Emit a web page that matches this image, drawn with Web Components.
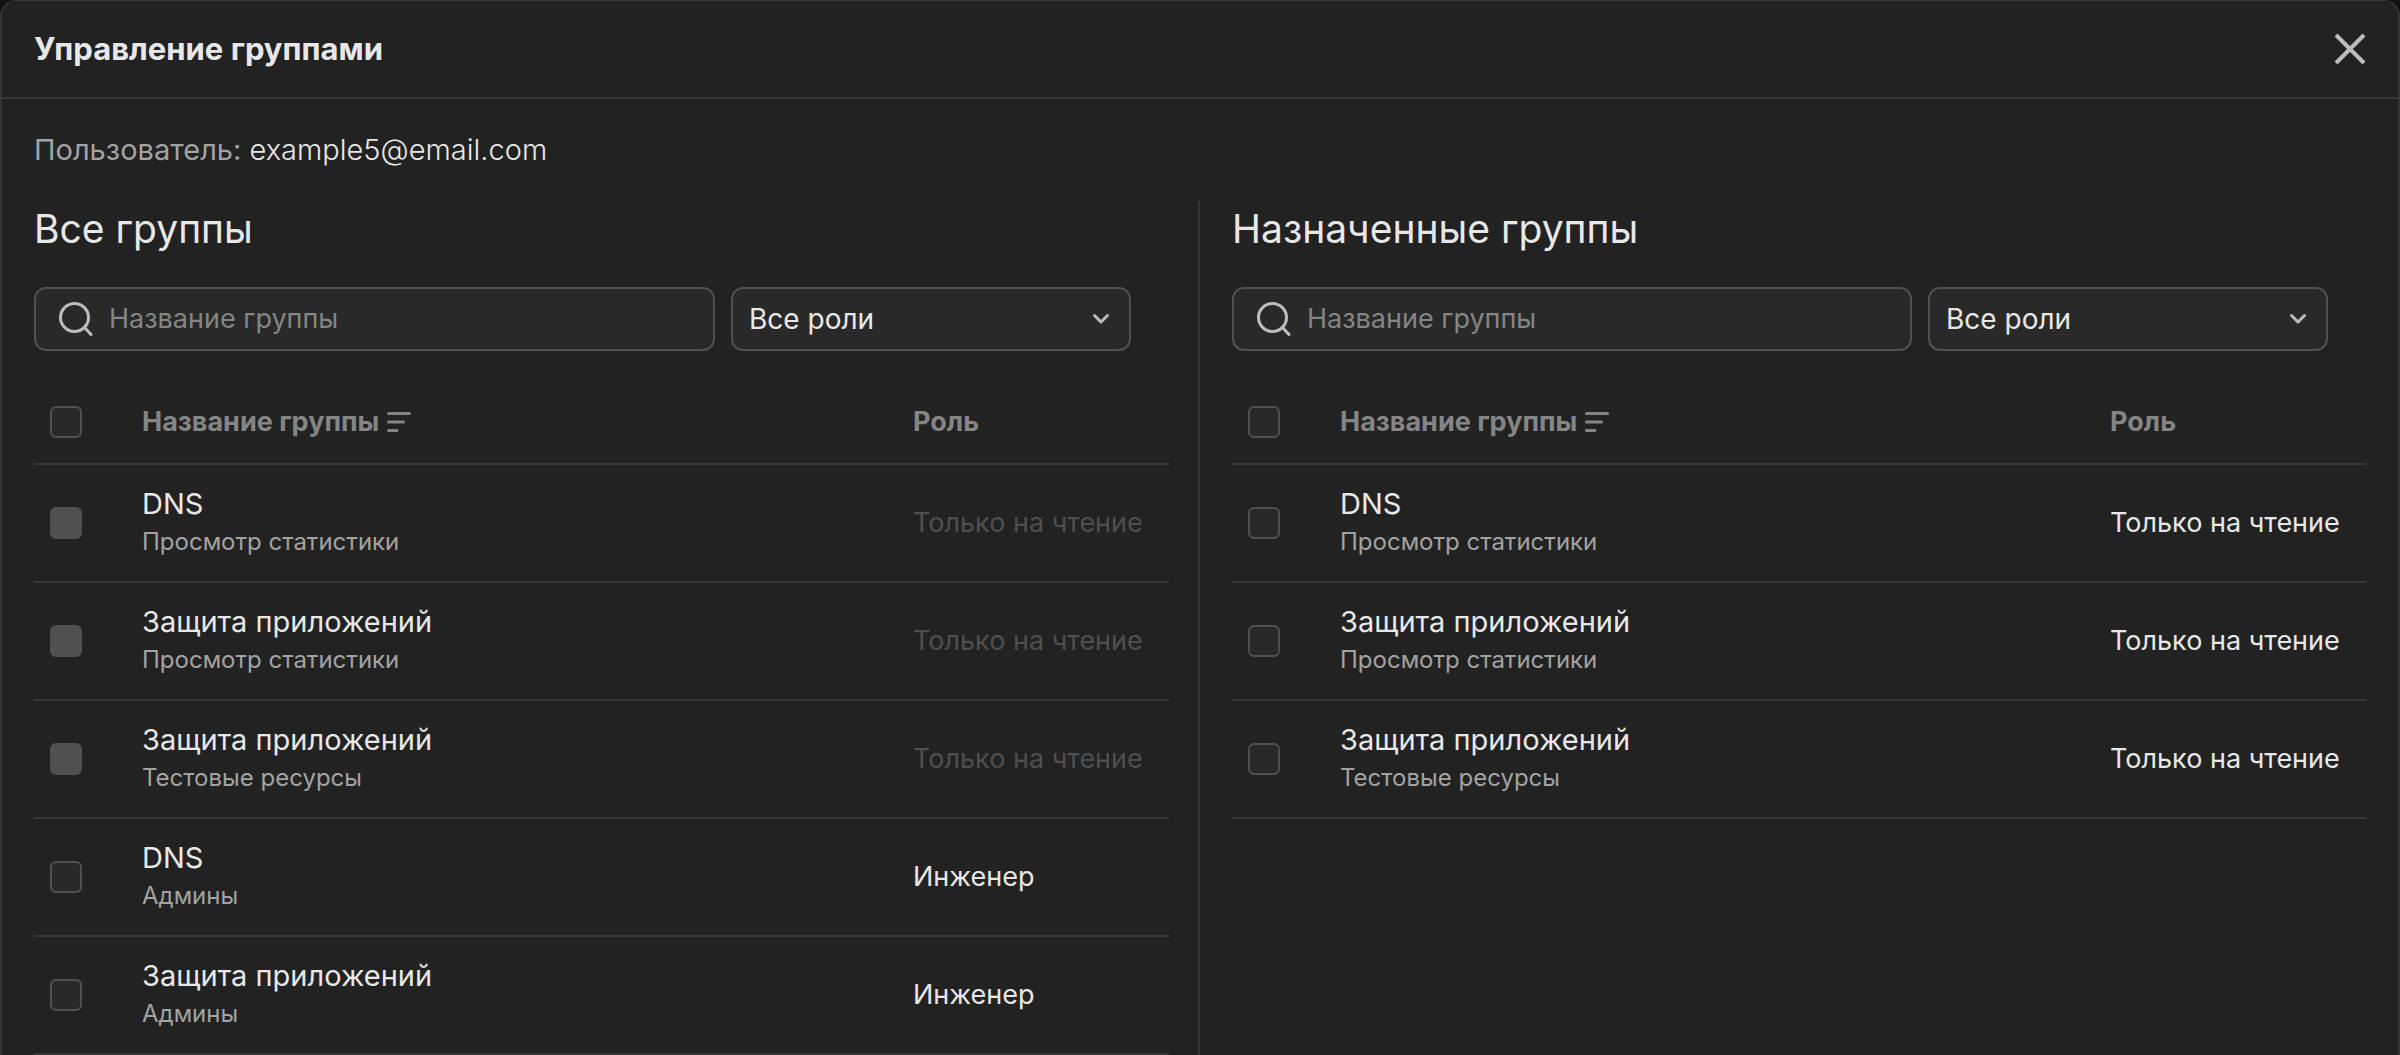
<!DOCTYPE html>
<html lang="ru">
<head>
  <meta charset="UTF-8">
  <meta name="viewport" content="width=device-width, initial-scale=1.0">
  <title>Управление группами</title>
  <style>
    :root {
      --bg: #222222;
      --field: #292929;
      --line: #363636;
      --border: #505050;
      --text: #e8e8e8;
      --soft: #a3a3a3;
      --muted: #858585;
      --icon: #bdbdbd;
      --off: #4f4f4f;
    }
    body {
      margin: 0;
      background: #121111;
      color: var(--text);
      font: 400 27px/40px Inter, "Liberation Sans", sans-serif;
    }
  </style>
</head>
<body>
  <modal-window>
    <span slot="title">Управление группами</span>
    <user-line slot="user" label="Пользователь:">example5@email.com</user-line>
    <group-pane id="all" heading="Все группы"></group-pane>
    <group-pane id="assigned" heading="Назначенные группы"></group-pane>
  </modal-window>

  <template id="modal-tmpl">
    <style>
      :host {
        display: flex;
        flex-direction: column;
        box-sizing: border-box;
        min-height: 100vh;
        background: var(--bg);
        border: 2px solid var(--line);
        border-top-width: 1px;
        border-bottom: none;
        border-radius: 16px 16px 0 0;
      }
      header {
        display: flex;
        align-items: center;
        justify-content: space-between;
        height: 96px;
        padding: 0 32px;
        border-bottom: 2px solid var(--line);
      }
      h1 { margin: 0; font-size: 31px; font-weight: 700; line-height: 40px; }
      button {
        display: flex;
        padding: 0;
        border: none;
        background: none;
        color: var(--icon);
        cursor: pointer;
      }
      main {
        flex: 1;
        display: flex;
        flex-direction: column;
        gap: 31px;
        padding: 31px 32px 0;
      }
      .panes {
        flex: 1;
        display: grid;
        grid-template-columns: minmax(0, 1fr) minmax(0, 1fr);
      }
    </style>
    <header>
      <h1><slot name="title"></slot></h1>
      <button type="button" aria-label="Закрыть">
        <svg width="32" height="32" viewBox="0 0 32 32" fill="none" stroke="currentColor" stroke-width="4"><path d="M2 2l28 28M30 2L2 30"/></svg>
      </button>
    </header>
    <main>
      <slot name="user"></slot>
      <div class="panes"><slot></slot></div>
    </main>
  </template>

  <template id="user-tmpl">
    <style>
      :host { display: block; font-size: 29px; font-weight: 300; }
      .label { color: var(--soft); font-weight: 400; }
    </style>
    <span class="label"></span> <slot></slot>
  </template>

  <template id="search-tmpl">
    <style>
      :host { display: block; }
      label {
        display: flex;
        align-items: center;
        gap: 16px;
        box-sizing: border-box;
        height: 64px;
        padding: 0 23px;
        background: var(--field);
        border: 2px solid var(--border);
        border-radius: 12px;
        color: var(--icon);
      }
      svg { flex: none; }
      input {
        flex: 1;
        min-width: 0;
        padding: 0;
        border: none;
        outline: none;
        background: none;
        color: var(--text);
        font: inherit;
      }
      input::placeholder { color: var(--muted); opacity: 1; }
    </style>
    <label>
      <svg width="34" height="34" viewBox="0 0 34 34" fill="none" stroke="currentColor" stroke-width="3" stroke-linecap="round"><circle cx="15.5" cy="15.5" r="14"/><path d="M25.5 25.5l6.5 7"/></svg>
      <input type="text" placeholder="Название группы" aria-label="Название группы">
    </label>
  </template>

  <template id="role-tmpl">
    <style>
      :host { display: block; position: relative; }
      select {
        appearance: none;
        display: block;
        box-sizing: border-box;
        width: 100%;
        height: 64px;
        padding: 0 52px 0 16px;
        background: var(--field);
        border: 2px solid var(--border);
        border-radius: 12px;
        color: var(--text);
        font: inherit;
        font-size: 28px;
      }
      svg {
        position: absolute;
        right: 20px;
        top: 22px;
        pointer-events: none;
        color: var(--icon);
      }
    </style>
    <select aria-label="Роль">
      <option>Все роли</option>
      <option>Только на чтение</option>
      <option>Инженер</option>
    </select>
    <svg width="20" height="20" viewBox="0 0 20 20" fill="none" stroke="currentColor" stroke-width="3" stroke-linecap="round" stroke-linejoin="round"><path d="M3.5 6.5L10 13l6.5-6.5"/></svg>
  </template>

  <template id="table-tmpl">
    <style>
      :host { display: block; }
      table {
        width: 100%;
        table-layout: fixed;
        border-collapse: separate;
        border-spacing: 0;
      }
      th, td {
        box-sizing: border-box;
        padding: 0;
        border-bottom: 2px solid var(--line);
        text-align: left;
        vertical-align: middle;
      }
      th { height: 84px; color: var(--muted); font-weight: 700; }
      td { height: 118px; }
      .check { width: 108px; padding-left: 16px; }
      .role { width: 256px; white-space: nowrap; }
      .sort { display: flex; align-items: center; gap: 8px; }
      input {
        appearance: none;
        display: block;
        box-sizing: border-box;
        width: 32px;
        height: 32px;
        margin: 0;
        background: var(--field);
        border: 2px solid var(--border);
        border-radius: 6px;
      }
      input:disabled { background: var(--border); }
      label { display: block; font-size: 29px; line-height: 37px; }
      small { display: block; color: var(--soft); font-size: 24px; line-height: 39px; }
      .off { color: var(--off); }
    </style>
    <table>
      <thead>
        <tr>
          <th class="check"><input type="checkbox" aria-label="Выбрать все"></th>
          <th><span class="sort">Название группы
            <svg width="24" height="24" viewBox="0 0 24 24" fill="none" stroke="currentColor" stroke-width="3" stroke-linecap="round"><path d="M1.5 3.5h21M1.5 12h15M1.5 20.5h8.500"/></svg></span></th>
          <th class="role">Роль</th>
        </tr>
      </thead>
      <tbody></tbody>
    </table>
  </template>

  <template id="pane-tmpl">
    <style>
      :host {
        display: block;
        padding-right: 29px;
        border-right: 2px solid var(--line);
      }
      :host(:last-child) {
        padding: 0 0 0 32px;
        border: none;
      }
      h2 { margin: 0 0 30px; font-size: 39px; font-weight: 400; line-height: 56px; }
      .filters {
        display: flex;
        gap: 16px;
        margin-bottom: 30px;
        padding-right: 38px;
      }
      search-field { flex: 1; }
      role-select { width: 400px; }
    </style>
    <h2></h2>
    <div class="filters">
      <search-field></search-field>
      <role-select></role-select>
    </div>
    <groups-table></groups-table>
  </template>

  <script>
    // common part: clone the template into an open shadow root
    class BaseElement extends HTMLElement {
      constructor(tmplId) {
        super()
        const tmpl = document.getElementById(tmplId)
        this.attachShadow({mode: 'open'}).appendChild(tmpl.content.cloneNode(true))
      }
    }

    class ModalWindow extends BaseElement {
      constructor() { super('modal-tmpl') }
    }

    class UserLine extends BaseElement {
      constructor() { super('user-tmpl') }
      connectedCallback() {
        this.shadowRoot.querySelector('.label').textContent = this.getAttribute('label')
      }
    }

    class SearchField extends BaseElement {
      constructor() { super('search-tmpl') }
    }

    class RoleSelect extends BaseElement {
      constructor() { super('role-tmpl') }
    }

    class GroupsTable extends BaseElement {
      constructor() { super('table-tmpl') }
      set rows(rows) {
        this.shadowRoot.querySelector('tbody').innerHTML = rows.map((row, i) => `
          <tr>
            <td class="check"><input type="checkbox" id="row-${ i }" ${ row.disabled ? 'disabled' : '' }></td>
            <td><label for="row-${ i }">${ row.name }</label><small>${ row.note }</small></td>
            <td class="role ${ row.disabled ? 'off' : '' }">${ row.role }</td>
          </tr>`).join('')
      }
    }

    class GroupPane extends BaseElement {
      constructor() { super('pane-tmpl') }
      connectedCallback() {
        this.shadowRoot.querySelector('h2').textContent = this.getAttribute('heading')
      }
      set rows(rows) {
        this.shadowRoot.querySelector('groups-table').rows = rows
      }
    }

    window.customElements.define('search-field', SearchField)
    window.customElements.define('role-select', RoleSelect)
    window.customElements.define('groups-table', GroupsTable)
    window.customElements.define('group-pane', GroupPane)
    window.customElements.define('user-line', UserLine)
    window.customElements.define('modal-window', ModalWindow)

    const assigned = [
      { name: 'DNS', note: 'Просмотр статистики', role: 'Только на чтение' },
      { name: 'Защита приложений', note: 'Просмотр статистики', role: 'Только на чтение' },
      { name: 'Защита приложений', note: 'Тестовые ресурсы', role: 'Только на чтение' }
    ]
    document.getElementById('assigned').rows = assigned
    // groups the user already has can't be picked again
    document.getElementById('all').rows = [
      ...assigned.map(row => ({ ...row, disabled: true })),
      { name: 'DNS', note: 'Админы', role: 'Инженер' },
      { name: 'Защита приложений', note: 'Админы', role: 'Инженер' }
    ]
  </script>
</body>
</html>
